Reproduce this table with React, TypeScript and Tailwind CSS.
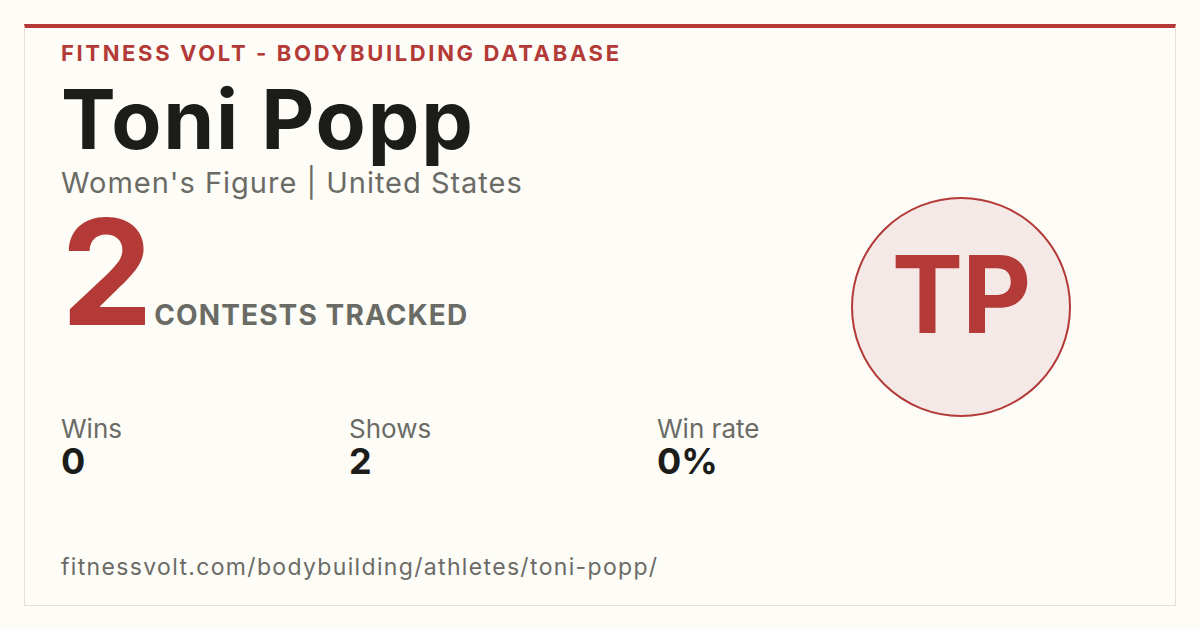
export default function App() {
  return (
    <div className="w-[1200px] h-[630px] bg-[#fdfcf7] pt-6 px-6 overflow-hidden" style={{ fontFamily: "Inter, 'Noto Sans', sans-serif" }}>
      <div className="h-[582px] flex border border-[#e3e0d8] border-t-4 border-t-[#b33a36] bg-[#fdfcf7]">
        <div className="flex-1 flex flex-col pl-9 pt-[14px] pb-[26px]">
          <div className="text-[22px] leading-none font-bold tracking-[0.12em] text-[#b33a36]">FITNESS VOLT - BODYBUILDING DATABASE</div>
          <div className="mt-[15px] text-[82px] leading-none font-bold text-[#1c1c1a] tracking-[0.022em]">Toni Popp</div>
          <div className="mt-[7px] text-[29px] leading-none text-[#6b6b66] tracking-[0.034em]">Women's Figure | United States</div>
          <div className="mt-[2px] flex items-baseline">
            <span className="text-[146px] leading-none font-bold text-[#b33a36] tracking-[-0.06em]">2</span>
            <span className="ml-[10px] text-[28px] leading-none font-bold text-[#6b6b66] tracking-[0.04em]">CONTESTS TRACKED</span>
          </div>
          <div className="mt-[71px] flex">
            <div className="w-[288px] flex flex-col">
              <span className="text-[26px] leading-[26px] text-[#6b6b66]">Wins</span>
              <span className="mt-[1px] text-[36px] leading-none font-bold text-[#1c1c1a]">0</span>
            </div>
            <div className="w-[308px] flex flex-col">
              <span className="text-[26px] leading-[26px] text-[#6b6b66]">Shows</span>
              <span className="mt-[1px] text-[36px] leading-none font-bold text-[#1c1c1a]">2</span>
            </div>
            <div className="flex flex-col">
              <span className="text-[26px] leading-[26px] text-[#6b6b66]">Win rate</span>
              <span className="mt-[1px] text-[36px] leading-none font-bold text-[#1c1c1a]">0%</span>
            </div>
          </div>
          <div className="mt-auto text-[23px] leading-none text-[#6b6b66] tracking-[0.058em]">fitnessvolt.com/bodybuilding/athletes/toni-popp/</div>
        </div>
        <div className="self-start mt-[169px] mr-[104px] w-[220px] h-[220px] rounded-full border-2 border-[#b33a36] bg-[#f5e9e8] flex items-center justify-center pb-[26px]">
          <span className="text-[107px] leading-none font-bold text-[#b33a36] tracking-[-0.01em]">TP</span>
        </div>
      </div>
    </div>
  );
}
